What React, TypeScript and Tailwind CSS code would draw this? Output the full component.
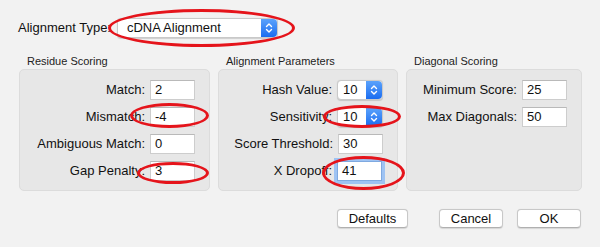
import React from "react";

const font = { fontFamily: '"Liberation Sans", Arial, sans-serif' };

function Stepper() {
  return (
    <div className="w-[16px] h-full flex items-center justify-center rounded-r-[4px] bg-gradient-to-b from-[#5aa2fb] to-[#1a6cf0]">
      <svg width="8" height="12" viewBox="0 0 8 12" fill="none" stroke="white" strokeWidth="1.4" strokeLinecap="round" strokeLinejoin="round">
        <path d="M1.5 4.5 L4 2 L6.5 4.5" />
        <path d="M1.5 7.5 L4 10 L6.5 7.5" />
      </svg>
    </div>
  );
}

function Field({ value, stepper, focus }: { value: string; stepper?: boolean; focus?: boolean }) {
  if (stepper) {
    return (
      <div className="w-[46px] h-[20px] flex bg-white border border-[#c9c9c9] rounded-[4px] shadow-[0_0.5px_1px_rgba(0,0,0,0.15)]">
        <div className="flex-1 pl-[5px] flex items-center text-[13px] text-[#111]">{value}</div>
        <Stepper />
      </div>
    );
  }
  return (
    <div
      className={
        "w-[45px] h-[20px] flex items-center pl-[4px] bg-white text-[13px] text-[#111] " +
        (focus ? "border border-[#7fa9e0] ring-[3px] ring-[#9ec3f3]" : "border border-[#cdcdcd] border-t-[#b9b9b9]")
      }
    >
      {value}
    </div>
  );
}

function Row({ label, children }: { label: string; children: React.ReactNode }) {
  return (
    <div className="flex items-center justify-end gap-[5px] h-[20px]">
      <span className="text-[13px] text-[#111]">{label}</span>
      {children}
    </div>
  );
}

function Group({ title, width, titlePad, children }: { title: string; width: number; titlePad: number; children: React.ReactNode }) {
  return (
    <div style={{ width }} className="flex flex-col">
      <div className="text-[11px] text-[#222] h-[13px] leading-[13px]" style={{ paddingLeft: titlePad }}>
        {title}
      </div>
      <div className="mt-[1px] h-[122px] bg-[#e7e7e7] border border-[#dcdcdc] rounded-[5px] pt-[10px] pr-[14px] flex flex-col gap-[7px]">
        {children}
      </div>
    </div>
  );
}

function Button({ label, w }: { label: string; w: number }) {
  return (
    <div
      style={{ width: w }}
      className="h-[19px] flex items-center justify-center bg-white border border-[#c8c8c8] border-b-[#b0b0b0] rounded-[4px] text-[13px] text-[#111] shadow-[0_0.5px_1px_rgba(0,0,0,0.12)]"
    >
      {label}
    </div>
  );
}

function Ring({ l, t, w, h }: { l: number; t: number; w: number; h: number }) {
  return (
    <div
      className="absolute border-[3px] border-[#e5141b] rounded-[50%] pointer-events-none"
      style={{ left: l, top: t, width: w, height: h }}
    />
  );
}

export default function App() {
  return (
    <div style={font} className="relative w-[600px] h-[247px] bg-[#f2f2f2] overflow-hidden">
      <div className="flex items-center pt-[18px] pl-[18px] gap-[6px]">
        <span className="text-[13px] text-[#111]">Alignment Type:</span>
        <div className="w-[161px] h-[20px] flex bg-white border border-[#c9c9c9] rounded-[4px] shadow-[0_0.5px_1px_rgba(0,0,0,0.15)]">
          <div className="flex-1 pl-[9px] flex items-center text-[13px] text-[#111]">cDNA Alignment</div>
          <Stepper />
        </div>
      </div>

      <div className="flex pl-[19px] pt-[17px] gap-[8px]">
        <Group title="Residue Scoring" width={191} titlePad={8}>
          <Row label="Match:"><Field value="2" /></Row>
          <Row label="Mismatch:"><Field value="-4" /></Row>
          <Row label="Ambiguous Match:"><Field value="0" /></Row>
          <Row label="Gap Penalty:"><Field value="3" /></Row>
        </Group>
        <Group title="Alignment Parameters" width={180} titlePad={8}>
          <Row label="Hash Value:"><Field value="10" stepper /></Row>
          <Row label="Sensitivity:"><Field value="10" stepper /></Row>
          <Row label="Score Threshold:"><Field value="30" /></Row>
          <Row label="X Dropoff:"><div className="w-[46px] flex"><Field value="41" focus /></div></Row>
        </Group>
        <Group title="Diagonal Scoring" width={176} titlePad={8}>
          <Row label="Minimum Score:"><Field value="25" /></Row>
          <Row label="Max Diagonals:"><Field value="50" /></Row>
        </Group>
      </div>

      <div className="flex pt-[18px] pl-[337px]">
        <Button label="Defaults" w={71} />
        <div className="w-[31px]" />
        <Button label="Cancel" w={64} />
        <div className="w-[14px]" />
        <Button label="OK" w={64} />
      </div>

      <Ring l={108} t={9} w={187} h={38} />
      <Ring l={130} t={103} w={79} h={25} />
      <Ring l={137} t={162} w={72} h={22} />
      <Ring l={323} t={105} w={78} h={23} />
      <Ring l={322} t={156} w={83} h={34} />
    </div>
  );
}
